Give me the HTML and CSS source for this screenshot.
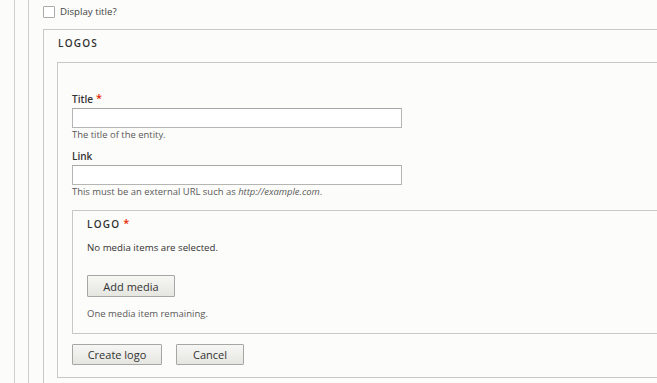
FILE: index.html
```html
<!DOCTYPE html>
<html>
<head>
    <meta charset="utf-8"/>
    <title>Logos</title>
    <link rel="stylesheet" href="styles.css">
</head>
<body>
<div class="page">
    <div class="frame">
        <div class="frame frame-in">
            <label class="check-row">
                <span class="checkbox"></span>
                <span>Display title?</span>
            </label>
            <div class="fieldset logos">
                <div class="legend">Logos</div>
                <div class="fieldset inner">
                    <div class="field">
                        <label class="label">Title<span class="req">*</span></label>
                        <input class="text" type="text">
                        <div class="desc">The title of the entity.</div>
                    </div>
                    <div class="field">
                        <label class="label">Link</label>
                        <input class="text" type="text">
                        <div class="desc">This must be an external URL such as <em>http://example.com</em>.</div>
                    </div>
                    <div class="fieldset media">
                        <div class="legend small">Logo<span class="req">*</span></div>
                        <p class="empty">No media items are selected.</p>
                        <button class="btn btn-add">Add media</button>
                        <div class="desc remain">One media item remaining.</div>
                    </div>
                    <div class="actions">
                        <button class="btn btn-create">Create logo</button>
                        <button class="btn btn-cancel">Cancel</button>
                    </div>
                </div>
            </div>
        </div>
    </div>
</div>
</body>
</html>
```

FILE: styles.css
```css
html,body{margin:0;padding:0;background:#fcfcfa;}
body{font-family:"Open Sans","DejaVu Sans",sans-serif;color:#333;overflow:hidden;height:383px;}
.page{padding-left:14px;width:720px;}
.frame{border-left:1px solid #cfcfcc;padding-left:13px;min-height:383px;}
.frame-in{padding-left:14px;}
.check-row{display:flex;align-items:center;height:29px;padding-bottom:6px;box-sizing:border-box;font-size:9.7px;color:#444;}
.checkbox{width:10px;height:10px;border:1px solid #aaa;border-radius:1px;background:#fff;margin-right:5px;}
.fieldset{border:1px solid #c8c8c6;}
.logos{border-bottom:none;min-height:354px;}
.legend{height:32px;line-height:27px;padding-left:14px;font-size:10px;font-weight:600;text-transform:uppercase;letter-spacing:0.12em;color:#333;}
.inner{margin-left:13px;padding:29px 0 12px 14px;}
.field{width:330px;}
.field + .field{margin-top:8px;}
.label{display:block;height:14px;font-size:10px;font-weight:600;line-height:14px;color:#333;}
.req{color:#e62600;font-weight:600;font-size:11px;line-height:0;letter-spacing:0;margin-left:3px;vertical-align:1px;}
.text{display:block;box-sizing:border-box;width:330px;height:20px;margin:2px 0 0;border:1px solid #b5b5b3;border-top-color:#a8a8a6;background:#fff;padding:0 4px;}
.desc{font-size:9.45px;line-height:12px;color:#595959;margin-top:1px;}
.desc em{font-style:italic;}
.media{margin-top:12px;margin-right:20px;padding:6px 14px 13px 14px;}
.legend.small{height:14px;line-height:14px;padding-left:0;}
.empty{margin:10px 0 0;font-size:9.7px;line-height:14px;color:#333;}
.btn{font-family:inherit;font-size:11px;color:#333;border:1px solid #a6a6a6;border-radius:1px;background:linear-gradient(#f6f6f3,#e6e6e1);padding:0;box-sizing:border-box;cursor:pointer;}
.btn-add{display:block;margin-top:20px;width:88px;height:22px;}
.remain{margin-top:11px;font-size:9.5px;}
.actions{display:flex;gap:14px;margin-top:10px;}
.btn-create{width:90px;height:21px;}
.btn-cancel{width:68px;height:21px;}
```
